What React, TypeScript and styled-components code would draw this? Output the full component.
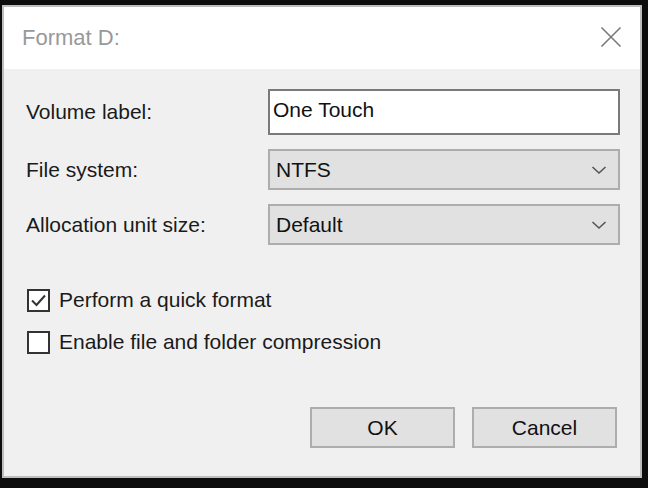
import React, { useState } from 'react'
import styled, { createGlobalStyle } from 'styled-components'

const GlobalStyle = createGlobalStyle`
  html, body {
    margin: 0;
    padding: 0;
    background: #0d0d0d;
    height: 100%;
  }
  body {
    font-family: "Liberation Sans", Arial, sans-serif;
  }
  #root {
    padding: 5px 0 0 2px;
  }
  * {
    box-sizing: border-box;
  }
`

const Dialog = styled.div`
  width: 640px;
  border: 2px solid #bdbdbd;
  background: #f0f0f0;
`

const TitleBar = styled.div`
  height: 62px;
  background: #ffffff;
  display: flex;
  align-items: center;
  justify-content: space-between;
  padding: 0 18px 0 18px;
`

const Title = styled.span`
  font-size: 22px;
  color: #999999;
`

const CloseButton = styled.button`
  width: 22px;
  height: 22px;
  padding: 0;
  border: none;
  background: transparent;
  display: flex;
  align-items: center;
  justify-content: center;
  margin-top: -2px;
`

const Body = styled.div`
  padding: 20px 20px 28px 22px;
`

const Form = styled.div`
  display: grid;
  grid-template-columns: 1fr 352px;
  row-gap: 14px;
  align-items: center;
`

const Label = styled.label`
  font-size: 21px;
  color: #1a1a1a;
`

const TextBox = styled.input`
  height: 46px;
  width: 100%;
  border: 2px solid #7a7a7a;
  background: #ffffff;
  font-family: "Liberation Sans", Arial, sans-serif;
  font-size: 21px;
  color: #111;
  padding: 0 0 5px 3px;
  outline: none;
`

const Select = styled.div`
  height: 41px;
  border: 2px solid #adadad;
  background: #e1e1e1;
  display: flex;
  align-items: center;
  justify-content: space-between;
  padding: 0 11px 0 6px;
  font-size: 21px;
  color: #111;
`

const Checks = styled.div`
  display: flex;
  flex-direction: column;
  gap: 14px;
  margin-top: 41px;
`

const CheckRow = styled.label`
  height: 28px;
  display: flex;
  align-items: center;
  gap: 9px;
  font-size: 21px;
  color: #1a1a1a;
`

const Box = styled.span`
  width: 23px;
  height: 23px;
  border: 2px solid #333333;
  background: #ffffff;
  display: flex;
  align-items: center;
  justify-content: center;
  margin-left: 1px;
`

const Buttons = styled.div`
  display: flex;
  justify-content: flex-end;
  gap: 17px;
  margin-top: 51px;
  padding-right: 3px;
`

const Button = styled.button`
  width: 145px;
  height: 41px;
  border: 2px solid #adadad;
  background: #e1e1e1;
  font-family: "Liberation Sans", Arial, sans-serif;
  font-size: 21px;
  color: #111;
  padding: 0;
`

const Chevron = () => (
  <svg width="16" height="10" viewBox="0 0 16 10">
    <path d="M1.5 2 L8 8 L14.5 2" fill="none" stroke="#555" strokeWidth="1.6" />
  </svg>
)

const Check = ({ checked, label, onToggle }: { checked: boolean; label: string; onToggle: () => void }) => (
  <CheckRow onClick={onToggle}>
    <Box>
      {checked && (
        <svg width="17" height="17" viewBox="0 0 17 17">
          <path d="M2 8.5 L6.5 13 L15 3.5" fill="none" stroke="#333" strokeWidth="2" />
        </svg>
      )}
    </Box>
    {label}
  </CheckRow>
)

export default function App() {
  const [volume, setVolume] = useState('One Touch')
  const [quick, setQuick] = useState(true)
  const [compress, setCompress] = useState(false)

  return (
    <>
      <GlobalStyle />
      <Dialog>
        <TitleBar>
          <Title>Format D:</Title>
          <CloseButton aria-label="Close">
            <svg width="22" height="22" viewBox="0 0 22 22">
              <path d="M1.5 1.5 L20.5 20.5 M20.5 1.5 L1.5 20.5" stroke="#7a7a7a" strokeWidth="1.6" />
            </svg>
          </CloseButton>
        </TitleBar>
        <Body>
          <Form>
            <Label>Volume label:</Label>
            <TextBox value={volume} onChange={(e) => setVolume(e.target.value)} />
            <Label>File system:</Label>
            <Select>
              NTFS
              <Chevron />
            </Select>
            <Label>Allocation unit size:</Label>
            <Select>
              Default
              <Chevron />
            </Select>
          </Form>
          <Checks>
            <Check checked={quick} label="Perform a quick format" onToggle={() => setQuick((p) => !p)} />
            <Check checked={compress} label="Enable file and folder compression" onToggle={() => setCompress((p) => !p)} />
          </Checks>
          <Buttons>
            <Button>OK</Button>
            <Button>Cancel</Button>
          </Buttons>
        </Body>
      </Dialog>
    </>
  )
}
